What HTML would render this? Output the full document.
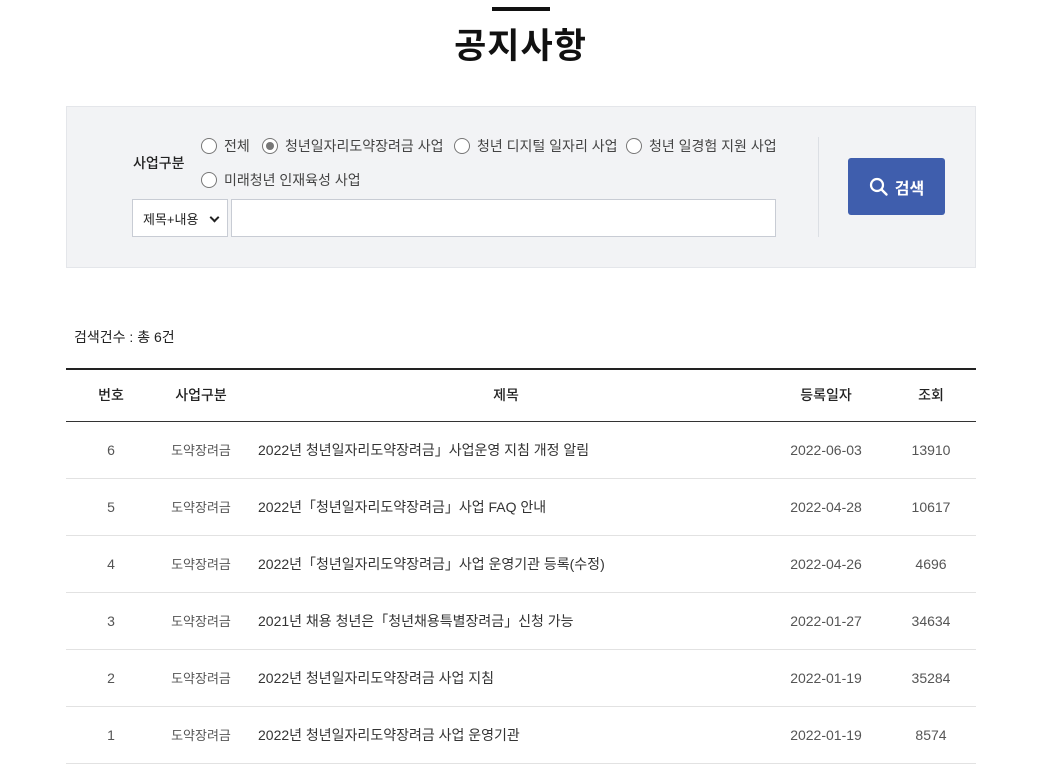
<!DOCTYPE html>
<html><head><meta charset="utf-8"><style>
*{margin:0;padding:0;box-sizing:border-box}
body{width:1047px;height:773px;background:#fff;font-family:"Liberation Sans","Noto Sans CJK KR",sans-serif;color:#222;position:relative;overflow:hidden}
.bar{position:absolute;left:492px;top:7px;width:58px;height:4px;background:#111}
h1{position:absolute;left:0;width:1041px;top:18px;text-align:center;font-size:35px;font-weight:700;color:#111;letter-spacing:1px}
.box{position:absolute;left:66px;top:106px;width:910px;height:162px;background:#f2f3f5;border:1px solid #e4e6ea}
.lab{position:absolute;left:66px;top:46px;font-size:14px;font-weight:500;color:#222}
.r{position:absolute;font-size:14px;color:#444;display:flex;align-items:center}
.r i{display:inline-block;width:16px;height:16px;border:1px solid #777;border-radius:50%;background:#fff;margin-right:7px;position:relative}
.r i.on:after{content:"";position:absolute;left:3px;top:3px;width:8px;height:8px;border-radius:50%;background:#777}
.sel{position:absolute;left:65px;top:92px;width:96px;height:38px;background:#fff;border:1px solid #c8ccd4;font-size:13px;padding:9px 0 0 10px;color:#222}
.sel:after{content:"";position:absolute;right:9px;top:14px;width:5px;height:5px;border-right:2px solid #222;border-bottom:2px solid #222;transform:rotate(45deg)}
.inp{position:absolute;left:164px;top:92px;width:545px;height:38px;background:#fff;border:1px solid #c8ccd4}
.vl{position:absolute;left:751px;top:30px;width:1px;height:100px;background:#dcdfe4}
.btn{position:absolute;left:781px;top:51px;width:97px;height:57px;background:#3f5ead;border-radius:3px;color:#fff;font-size:16px;font-weight:700;display:flex;align-items:center;justify-content:center;gap:6px}
.cnt{position:absolute;left:74px;top:327px;font-size:14px;color:#222}
table{position:absolute;left:66px;top:368px;width:910px;border-collapse:collapse;border-top:2px solid #222}
th{height:52px;font-size:14px;font-weight:500;color:#222;border-bottom:1px solid #333}
td{height:57px;border-bottom:1px solid #e2e2e2;font-size:14px;color:#555;text-align:center}
td.k{font-size:13px}
td.t{text-align:left;color:#333;padding-left:12px}
</style></head><body>
<div class="bar"></div>
<h1>공지사항</h1>
<div class="box">
<div class="lab">사업구분</div>
<div class="r" style="left:134px;top:29px"><i></i>전체</div>
<div class="r" style="left:195px;top:29px"><i class="on"></i>청년일자리도약장려금 사업</div>
<div class="r" style="left:387px;top:29px"><i></i>청년 디지털 일자리 사업</div>
<div class="r" style="left:559px;top:29px"><i></i>청년 일경험 지원 사업</div>
<div class="r" style="left:134px;top:63px"><i></i>미래청년 인재육성 사업</div>
<div class="sel">제목+내용</div>
<div class="inp"></div>
<div class="vl"></div>
<div class="btn"><svg width="20" height="20" viewBox="0 0 20 20"><circle cx="8" cy="8" r="6" fill="none" stroke="#fff" stroke-width="2.2"/><line x1="12.5" y1="12.5" x2="17.5" y2="17.5" stroke="#fff" stroke-width="2.4" stroke-linecap="round"/></svg>검색</div>
</div>
<div class="cnt">검색건수 : 총 6건</div>
<table>
<tr><th style="width:90px">번호</th><th style="width:90px">사업구분</th><th>제목</th><th style="width:120px">등록일자</th><th style="width:90px">조회</th></tr>
<tr><td>6</td><td class="k">도약장려금</td><td class="t">2022년 청년일자리도약장려금」사업운영 지침 개정 알림</td><td>2022-06-03</td><td>13910</td></tr>
<tr><td>5</td><td class="k">도약장려금</td><td class="t">2022년「청년일자리도약장려금」사업 FAQ 안내</td><td>2022-04-28</td><td>10617</td></tr>
<tr><td>4</td><td class="k">도약장려금</td><td class="t">2022년「청년일자리도약장려금」사업 운영기관 등록(수정)</td><td>2022-04-26</td><td>4696</td></tr>
<tr><td>3</td><td class="k">도약장려금</td><td class="t">2021년 채용 청년은「청년채용특별장려금」신청 가능</td><td>2022-01-27</td><td>34634</td></tr>
<tr><td>2</td><td class="k">도약장려금</td><td class="t">2022년 청년일자리도약장려금 사업 지침</td><td>2022-01-19</td><td>35284</td></tr>
<tr><td>1</td><td class="k">도약장려금</td><td class="t">2022년 청년일자리도약장려금 사업 운영기관</td><td>2022-01-19</td><td>8574</td></tr>
</table>
</body></html>
